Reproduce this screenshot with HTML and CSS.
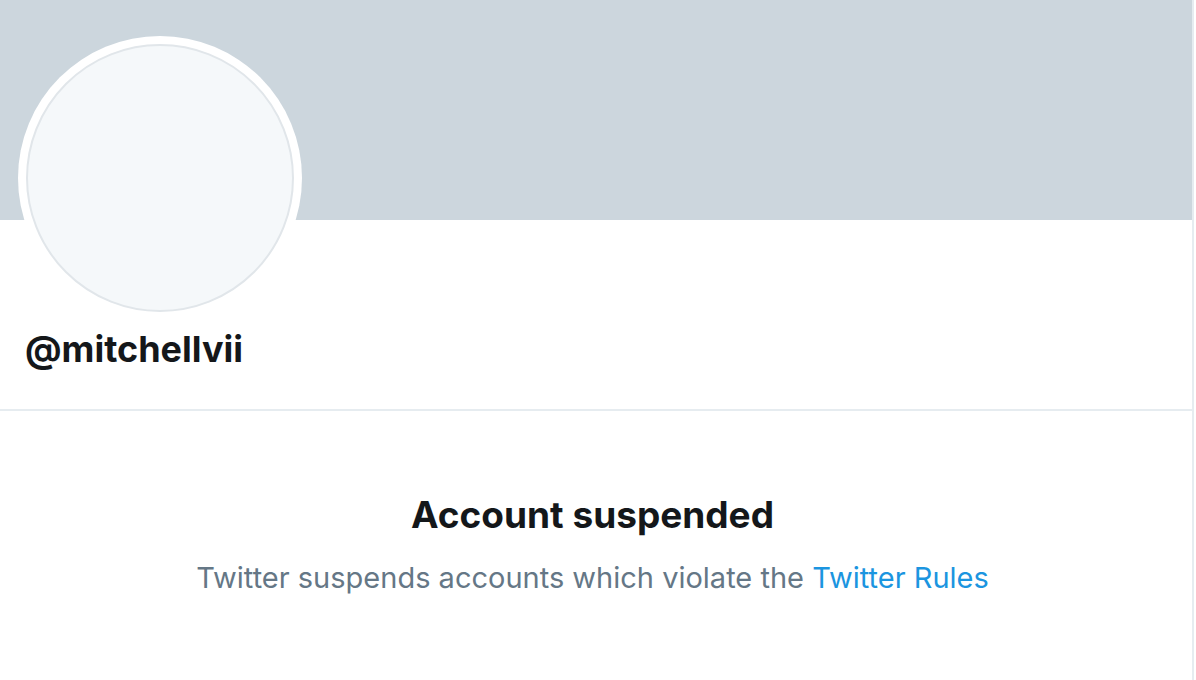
FILE: index.html
```html
<!DOCTYPE html>
<html>
<head>
<meta charset="utf-8">
<link rel="stylesheet" href="styles.css">
</head>
<body>
<div class="page">
  <div class="banner"></div>
  <div class="profile">
    <div class="avatar"><div class="avatar-inner"></div></div>
    <div class="handle">@mitchellvii</div>
  </div>
  <div class="notice">
    <h1 class="notice-title">Account suspended</h1>
    <p class="notice-text">Twitter suspends accounts which violate the <a class="notice-link" href="#">Twitter Rules</a></p>
  </div>
</div>
</body>
</html>
```

FILE: styles.css
```css
html, body {
  margin: 0;
  padding: 0;
  background: #ffffff;
}
body {
  font-family: Inter, "Noto Sans", "Liberation Sans", sans-serif;
}
.page {
  width: 1192px;
  height: 680px;
  border-right: 2px solid #e6ecf0;
  box-sizing: content-box;
}
.banner {
  height: 220px;
  background: #ccd6dd;
}
.profile {
  display: flex;
  flex-direction: column;
  align-items: flex-start;
  padding: 0 0 0 18px;
  height: 191px;
  border-bottom: 2px solid #e6ecf0;
  box-sizing: border-box;
}
.avatar {
  width: 284px;
  height: 284px;
  margin-top: -184px;
  border-radius: 50%;
  background: #ffffff;
  padding: 8px;
  box-sizing: border-box;
  flex-shrink: 0;
}
.avatar-inner {
  width: 100%;
  height: 100%;
  border-radius: 50%;
  background: #f5f8fa;
  border: 2px solid #e1e6ea;
  box-sizing: border-box;
}
.handle {
  margin: 7px 0 0 7px;
  font-size: 36px;
  font-weight: 700;
  color: #14171a;
  line-height: 44px;
}
.notice {
  text-align: center;
  padding: 82px 7px 0 0;
}
.notice-title {
  margin: 0;
  font-size: 37px;
  font-weight: 700;
  color: #14171a;
  line-height: 44px;
}
.notice-text {
  margin: 23px 0 0;
  font-size: 29px;
  color: #657786;
  line-height: 36px;
}
.notice-link {
  color: #1b95e0;
  text-decoration: none;
}
```
